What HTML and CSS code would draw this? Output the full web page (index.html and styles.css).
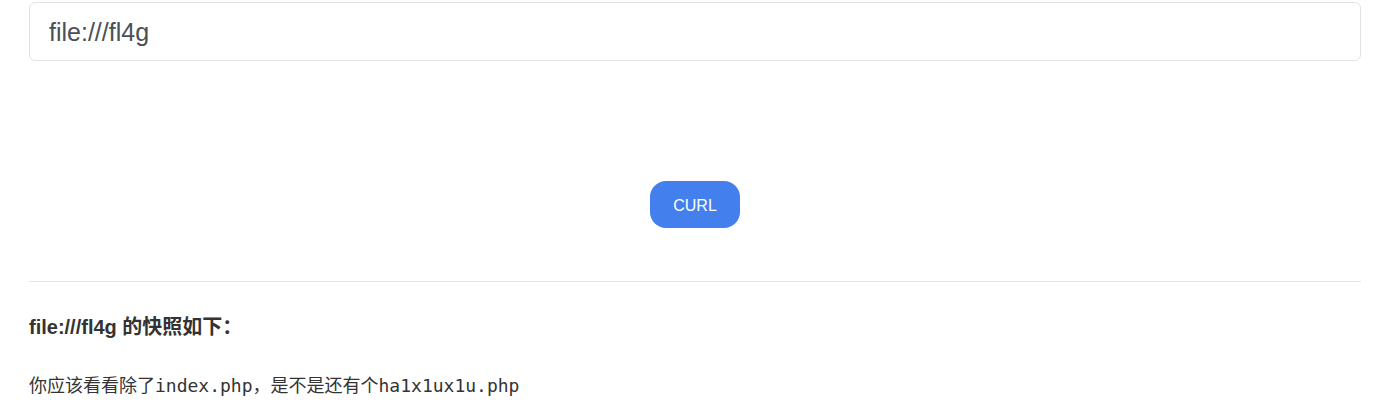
FILE: index.html
```html
<!DOCTYPE html>
<html>
<head>
<meta charset="utf-8">
<link rel="stylesheet" href="styles.css">
</head>
<body>
<div class="wrap">
  <div class="field">file:///fl4g</div>
  <div class="actions"><button class="btn">CURL</button></div>
  <hr class="rule">
  <h4 class="title">file:///fl4g 的快照如下：</h4>
  <pre class="out">你应该看看除了index.php，是不是还有个ha1x1ux1u.php</pre>
</div>
</body>
</html>
```
FILE: styles.css
```css
html, body { margin: 0; padding: 0; background: #fff; }
body { font-family: "Liberation Sans", Arial, "Noto Sans CJK SC", sans-serif; color: #333; }
.wrap { width: 1332px; margin-left: 29px; padding-top: 2px; }
.field {
  box-sizing: border-box;
  height: 59px;
  border: 1px solid #e2e2e2;
  border-radius: 6px;
  padding: 1px 19px 0;
  display: flex;
  align-items: center;
  font-size: 25px;
  color: #495057;
}
.actions { display: flex; justify-content: center; padding-top: 120px; }
.btn {
  width: 90px; height: 47px;
  border: none; border-radius: 16px;
  background: #4380ee; color: #fff;
  font-family: "Liberation Sans", Arial, sans-serif;
  font-size: 16px;
  padding: 2px 0 0;
}
.rule { border: 0; border-top: 1px solid #e5e5e5; margin: 53px 0 0; height: 0; }
.title { font-size: 20px; font-weight: bold; margin: 32px 0 0; line-height: 26px; color: #333; }
.out { font-family: "DejaVu Sans Mono", "Liberation Mono", "Noto Sans CJK SC", monospace; font-size: 18px; margin: 34px 0 0; line-height: 24px; color: #333; }
```
